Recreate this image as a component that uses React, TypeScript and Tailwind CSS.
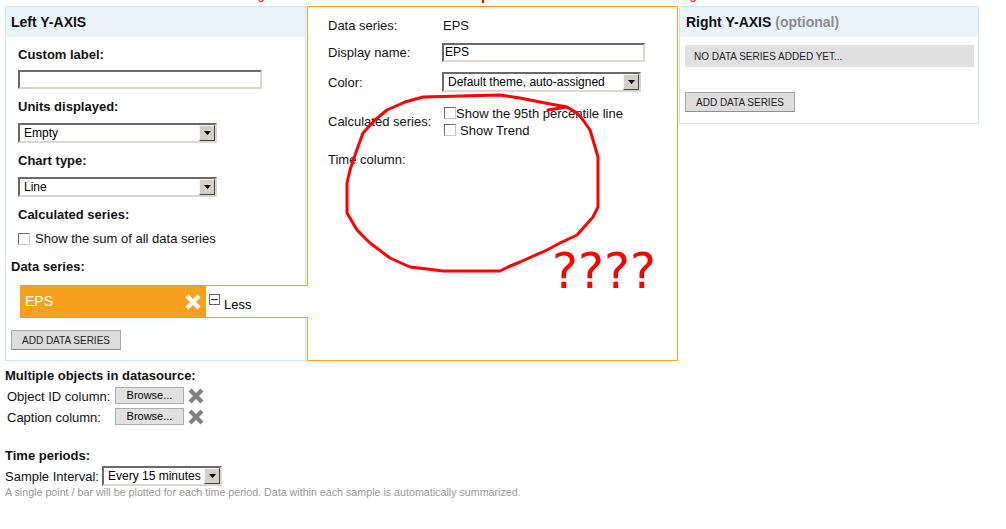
import React from "react";

function Dropdown({ value, className }: { value: string; className: string }) {
  return (
    <div
      className={
        "flex h-[20px] items-stretch bg-white border-2 border-t-[#696969] border-l-[#696969] border-r-[#dcd8d0] border-b-[#dcd8d0] " +
        className
      }
    >
      <div className="flex-1 overflow-hidden whitespace-nowrap pl-[4px] text-[12px] leading-[16px] text-black">{value}</div>
      <div className="flex w-[16px] items-center justify-center bg-[#d4d0c8] border border-t-[#f4f4f4] border-l-[#f4f4f4] border-r-[#404040] border-b-[#404040]">
        <svg width="7" height="4" viewBox="0 0 7 4">
          <path d="M0 0H7L3.5 4Z" fill="#000" />
        </svg>
      </div>
    </div>
  );
}

function Checkbox() {
  return (
    <span className="inline-block h-[12px] w-[12px] shrink-0 bg-white border border-t-[#707070] border-l-[#707070] border-r-[#c8c8c8] border-b-[#c8c8c8]" />
  );
}

function Cross({ color, size }: { color: string; size: number }) {
  return (
    <svg width={size} height={size} viewBox="0 0 16 16">
      <path d="M2 2L14 14M14 2L2 14" stroke={color} strokeWidth="4.2" />
    </svg>
  );
}

function GrayButton({ label, className }: { label: string; className: string }) {
  return (
    <div
      className={
        "flex h-[20px] items-center justify-center bg-[#dddddd] border border-[#a8a8a8] border-b-[#8f8f8f] text-[10px] text-[#222] " +
        className
      }
    >
      {label}
    </div>
  );
}

export default function App() {
  return (
    <div className="relative h-[529px] w-[1006px] overflow-hidden bg-white font-['Liberation_Sans',Arial,sans-serif] text-[#111]">
      {/* tails of the red note cut off above */}
      <span className="absolute left-[258px] top-[-3px] h-[5px] w-[6px] rounded-b-full border-b-[1.5px] border-x-[1.5px] border-[#ff0000]" />
      <span className="absolute left-[482px] top-0 h-[3px] w-[1.5px] bg-[#ff0000]" />
      <span className="absolute left-[690px] top-[-3px] h-[5px] w-[6px] rounded-b-full border-b-[1.5px] border-x-[1.5px] border-[#ff0000]" />

      <div className="flex items-start pl-[5px] pt-[6px]">
        {/* Left axis */}
        <div className="h-[355px] w-[301px] shrink-0 border border-[#cfe6f4] bg-white">
          <div className="flex h-[30px] items-center bg-[#eaf4fb] pl-[5px] text-[14px] font-bold">Left Y-AXIS</div>
          <div className="pl-[12px]">
            <div className="mt-[10px] text-[13px] font-bold leading-[15px]">Custom label:</div>
            <div className="mt-[8px] h-[19px] w-[244px] bg-white border-2 border-t-[#696969] border-l-[#696969] border-r-[#dcd8d0] border-b-[#dcd8d0]" />
            <div className="mt-[10px] text-[13px] font-bold leading-[15px]">Units displayed:</div>
            <Dropdown value="Empty" className="mt-[9px] w-[199px]" />
            <div className="mt-[10px] text-[13px] font-bold leading-[15px]">Chart type:</div>
            <Dropdown value="Line" className="mt-[9px] w-[199px]" />
            <div className="mt-[10px] text-[13px] font-bold leading-[15px]">Calculated series:</div>
            <div className="mt-[9px] flex h-[15px] items-center gap-[5px]">
              <Checkbox />
              <span className="text-[13px] leading-[15px]">Show the sum of all data series</span>
            </div>
          </div>
          <div className="mt-[13px] pl-[5px] text-[13px] font-bold leading-[15px]">Data series:</div>
          <div className="relative z-10 mr-[-3px] ml-[14px] mt-[11px] flex h-[33px]">
            <div className="flex w-[186px] items-center justify-between bg-[#f7a11f] pl-[5px] pr-[5px]">
              <span className="text-[14px] text-white">EPS</span>
              <Cross color="#ffffff" size={16} />
            </div>
            <div className="flex flex-1 items-center border-y border-[#f7a11f] bg-white pl-[3px]">
              <span className="mb-[4px] flex h-[11px] w-[11px] items-center justify-center border border-[#666]">
                <span className="h-[1px] w-[7px] bg-[#333]" />
              </span>
              <span className="mt-[5px] pl-[4px] text-[13px] leading-[15px] text-black">Less</span>
            </div>
          </div>
          <GrayButton label="ADD DATA SERIES" className="ml-[5px] mt-[12px] w-[110px]" />
        </div>

        {/* Series detail */}
        <div className="ml-[1px] h-[355px] w-[371px] shrink-0 border border-[#f5a425] bg-white pl-[20px] pt-[9px] text-[13px] leading-[15px]">
          <div className="flex h-[19px] items-center">
            <span className="w-[114px]">Data series:</span>
            <span className="pl-[1px]">EPS</span>
          </div>
          <div className="mt-[8px] flex items-center">
            <span className="w-[114px]">Display name:</span>
            <div className="h-[19px] w-[203px] bg-white border-2 border-t-[#696969] border-l-[#696969] border-r-[#dcd8d0] border-b-[#dcd8d0] pl-[1px] text-[12px] leading-[15px] text-black">
              EPS
            </div>
          </div>
          <div className="mt-[10px] flex items-center">
            <span className="w-[114px]">Color:</span>
            <Dropdown value="Default theme, auto-assigned" className="w-[199px]" />
          </div>
          <div className="mt-[13px] flex items-center">
            <span className="w-[114px]">Calculated series:</span>
            <div className="pl-[2px]">
              <div className="flex h-[16px] items-center">
                <Checkbox />
                <span>Show the 95th percentile line</span>
              </div>
              <div className="flex h-[17px] items-center gap-[4px]">
                <Checkbox />
                <span className="mt-[2px]">Show Trend</span>
              </div>
            </div>
          </div>
          <div className="mt-[14px] h-[15px]">Time column:</div>
        </div>

        {/* Right axis */}
        <div className="ml-[1px] h-[118px] w-[300px] shrink-0 border border-[#cfe6f4] bg-white">
          <div className="flex h-[30px] items-center bg-[#eaf4fb] pl-[6px] text-[14px] font-bold">
            Right Y-AXIS<span className="ml-[4px] text-[#8c8c8c]">(optional)</span>
          </div>
          <div className="ml-[5px] mt-[8px] flex h-[22px] w-[289px] items-center bg-[#e0e0e0] pl-[9px] text-[10px] text-[#222]">
            NO DATA SERIES ADDED YET...
          </div>
          <GrayButton label="ADD DATA SERIES" className="ml-[5px] mt-[25px] w-[110px]" />
        </div>
      </div>

      {/* Lower settings */}
      <div className="pl-[5px] text-[13px] leading-[15px]">
        <div className="mt-[7px] font-bold">Multiple objects in datasource:</div>
        <div className="mt-[4px] flex h-[17px] items-center pl-[2px]">
          <span className="mt-[2px] w-[108px]">Object ID column:</span>
          <div className="flex h-[17px] w-[69px] items-center justify-center border border-[#adadad] bg-[#e1e1e1] text-[11px] leading-[13px] text-black">
            Browse...
          </div>
          <span className="ml-[4px]">
            <Cross color="#808080" size={16} />
          </span>
        </div>
        <div className="mt-[4px] flex h-[17px] items-center pl-[2px]">
          <span className="mt-[2px] w-[108px]">Caption column:</span>
          <div className="flex h-[17px] w-[69px] items-center justify-center border border-[#adadad] bg-[#e1e1e1] text-[11px] leading-[13px] text-black">
            Browse...
          </div>
          <span className="ml-[4px]">
            <Cross color="#808080" size={16} />
          </span>
        </div>
        <div className="mt-[23px] font-bold">Time periods:</div>
        <div className="mt-[3px] flex h-[20px] items-center">
          <span className="w-[97px]">Sample Interval:</span>
          <Dropdown value="Every 15 minutes" className="w-[120px]" />
        </div>
        <div className="text-[10.7px] leading-[12px] text-[#999]">
          A single point / bar will be plotted for each time period. Data within each sample is automatically summarized.
        </div>
      </div>

      {/* Red annotation */}
      <svg className="pointer-events-none absolute left-0 top-0 z-20" width="1006" height="529" viewBox="0 0 1006 529">
        <path
          d="M548 110 L567 107 L577 113 L583 120 L590 130 L593 140 L598 157 L598 207 L593 217 L585 226 L577 235 L560 243 L547 250 L520 262 L508 267 L500 271 L443 271 L427 269 L410 267 L390 258 L370 243 L357 230 L347 213 L347 183 L350 170 L355 155 L363 133 L375 120 L387 110 L405 102 L423 97 L500 95 L520 98 L545 103 L567 107"
          fill="none"
          stroke="#ff0000"
          strokeWidth="3"
          strokeLinejoin="round"
          strokeLinecap="round"
        />
      </svg>
      <div className="pointer-events-none absolute left-[552px] top-[247px] z-20 font-['DejaVu_Sans',sans-serif] text-[49px] leading-[49px] text-[#ff0000]">
        ????
      </div>
    </div>
  );
}
